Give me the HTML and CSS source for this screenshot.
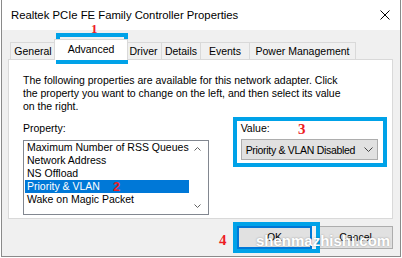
FILE: index.html
```html
<!doctype html>
<html>
<head>
<meta charset="utf-8">
<title>Realtek PCIe FE Family Controller Properties</title>
<link rel="stylesheet" href="styles.css">
</head>
<body>
<div class="win">
	<div class="titlebar">
		<span class="title">Realtek PCIe FE Family Controller Properties</span>
		<svg class="close" width="10" height="10" viewBox="0 0 10 10"><path d="M0.5 0.5L9.5 9.5M9.5 0.5L0.5 9.5" stroke="#000" stroke-width="1" fill="none"/></svg>
	</div>
	<div class="main">
		<ul class="tabs">
			<li class="t-gen">General</li>
			<li class="on">Advanced</li>
			<li class="t-drv">Driver</li>
			<li class="t-det">Details</li>
			<li class="t-evt">Events</li>
			<li class="t-pow">Power Management</li>
		</ul>
		<div class="panel">
			<p class="intro">The following properties are available for this network adapter. Click the property you want to change on the left, and then select its value on the right.</p>
			<div class="cols">
				<div class="left">
					<p class="lbl">Property:</p>
					<div class="list">
						<ul class="items">
							<li>Maximum Number of RSS Queues</li>
							<li>Network Address</li>
							<li>NS Offload</li>
							<li class="sel">Priority &amp; VLAN</li>
							<li>Wake on Magic Packet</li>
						</ul>
						<div class="sbar">
							<svg width="7" height="4" viewBox="0 0 7 4"><path d="M0.5 3.5L3.5 0.5L6.5 3.5" stroke="#606060" fill="none"/></svg>
							<svg width="7" height="4" viewBox="0 0 7 4"><path d="M0.5 0.5L3.5 3.5L6.5 0.5" stroke="#606060" fill="none"/></svg>
						</div>
					</div>
				</div>
				<div class="right">
					<p class="lbl">Value:</p>
					<div class="combo">
						<span>Priority &amp; VLAN Disabled</span>
						<svg width="9" height="5" viewBox="0 0 9 5"><path d="M0.5 0.5L4.5 4.5L8.5 0.5" stroke="#444" fill="none"/></svg>
					</div>
				</div>
			</div>
		</div>
		<div class="btns">
			<div class="btn ok">OK</div>
			<div class="btn">Cancel</div>
		</div>
	</div>

	<!-- annotations drawn over the dialog -->
	<div class="mark m1"></div>
	<div class="mark m3"></div>
	<div class="mark m4"></div>
	<span class="num n1">1</span>
	<span class="num n2">2</span>
	<span class="num n3">3</span>
	<span class="num n4">4</span>
	<span class="wm">shenmazhishi.com</span>
</div>
</body>
</html>
```
FILE: styles.css
```css
body,ul,p { margin:0; padding:0;}
li { list-style:none;}
body { background:#fff; font-family:"Liberation Sans", Arial, sans-serif; font-size:10.5px; color:#000;}

.win { position:relative; width:400px; height:257px; margin-left:1px; border:1px solid #8a8a8a; border-top:none; box-sizing:border-box; background:#f0f0f0; overflow:hidden;}

.titlebar { height:30px; background:#fff; display:flex; align-items:center; justify-content:space-between; padding:0 10px 0 9px;}
.title { font-size:11.3px;}
.close { display:block;}

.main { padding:9px 7px 0 6px;}

.tabs { display:flex; align-items:flex-end; height:20px; padding-left:2px;}
.tabs li { height:17px; line-height:16px; border:1px solid #d9d9d9; border-bottom:none; border-left:none; background:#f0f0f0; text-align:center; box-sizing:border-box; white-space:nowrap;}
.tabs .t-gen { width:46px; border-left:1px solid #d9d9d9;}
.tabs .t-drv { width:36px;}
.tabs .t-det { width:39px;}
.tabs .t-evt { width:49px;}
.tabs .t-pow { width:106px;}
.tabs .on { position:relative; z-index:1; width:74px; height:21px; line-height:18px; margin:0 -2px -1px -2px; background:#fff; border-left:1px solid #d9d9d9;}

.panel { height:160px; background:#fff; border:1px solid #d9d9d9; box-sizing:border-box; padding:14px 14px 0 14px;}
.intro { width:332px; line-height:13px;}

.cols { display:flex; margin-top:9px;}
.lbl { line-height:13px;}
.left { width:186px;}
.right { margin-left:32px; width:138px;}

.list { display:flex; height:75px; margin-top:5px; border:1px solid #828790; box-sizing:border-box;}
.items { flex:1; padding:0 0 0 1px;}
.items li { height:13px; line-height:13px; padding-left:2px; white-space:nowrap;}
.items .sel { background:#0078d7; color:#fff;}
.sbar { width:17px; display:flex; flex-direction:column; justify-content:space-between; align-items:center; padding:6px 2px 6px 0;}
.sbar svg { display:block;}

.combo { display:flex; align-items:center; justify-content:space-between; height:21px; margin-top:4px; padding:0 4px 0 4px; background:#e1e1e1; border:1px solid #adadad; box-sizing:border-box; white-space:nowrap;}
.combo span { letter-spacing:-0.3px;}
.combo svg { display:block;}

.btns { display:flex; justify-content:flex-end; gap:6px; margin-top:7px;}
.btn { width:75px; height:23px; line-height:21px; text-align:center; background:#e1e1e1; border:1px solid #adadad; box-sizing:border-box;}
.btn.ok { border:2px solid #0078d7; line-height:19px;}

.mark { position:absolute; border:4px solid #00a2e8; box-sizing:border-box;}
.m1 { left:54px; top:33px; width:72px; height:31px;}
.m3 { left:231px; top:117px; width:154px; height:50px;}
.m4 { left:231px; top:222px; width:87px; height:31px;}

.num { position:absolute; font-family:"Liberation Serif", serif; font-weight:bold; color:#ed1c24; line-height:1;}
.n1 { left:89px; top:22px; font-size:13px;}
.n2 { left:111px; top:180px; font-size:13px; font-family:"Liberation Sans", sans-serif;}
.n3 { left:296px; top:122px; font-size:15px;}
.n4 { left:217px; top:233px; font-size:15px;}

.wm { position:absolute; left:254px; top:232px; font-size:15px; font-weight:bold; color:#fff; text-shadow:0 0 2px rgba(0,0,0,0.35);}
```
